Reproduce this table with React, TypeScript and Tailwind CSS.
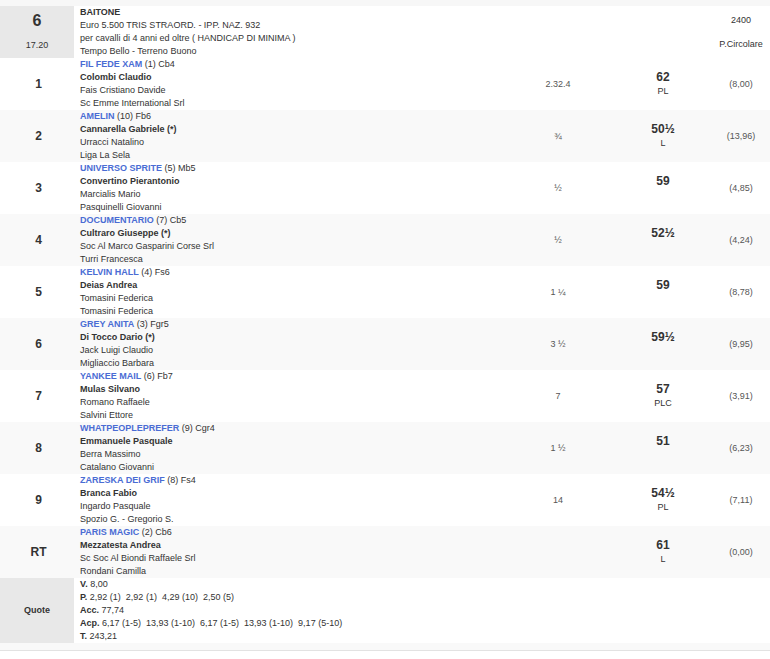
const rows = [
  { n: '1', horse: 'FIL FEDE XAM', info: '(1) Cb4', jockey: 'Colombi Claudio', trainer: 'Fais Cristiano Davide', owner: 'Sc Emme International Srl', time: '2.32.4', weight: '62', tag: 'PL', odds: '(8,00)' },
  { n: '2', horse: 'AMELIN', info: '(10) Fb6', jockey: 'Cannarella Gabriele (*)', trainer: 'Urracci Natalino', owner: 'Liga La Sela', time: '¾', weight: '50½', tag: 'L', odds: '(13,96)' },
  { n: '3', horse: 'UNIVERSO SPRITE', info: '(5) Mb5', jockey: 'Convertino Pierantonio', trainer: 'Marcialis Mario', owner: 'Pasquinelli Giovanni', time: '½', weight: '59', tag: '', odds: '(4,85)' },
  { n: '4', horse: 'DOCUMENTARIO', info: '(7) Cb5', jockey: 'Cultraro Giuseppe (*)', trainer: 'Soc Al Marco Gasparini Corse Srl', owner: 'Turri Francesca', time: '½', weight: '52½', tag: '', odds: '(4,24)' },
  { n: '5', horse: 'KELVIN HALL', info: '(4) Fs6', jockey: 'Deias Andrea', trainer: 'Tomasini Federica', owner: 'Tomasini Federica', time: '1 ¼', weight: '59', tag: '', odds: '(8,78)' },
  { n: '6', horse: 'GREY ANITA', info: '(3) Fgr5', jockey: 'Di Tocco Dario (*)', trainer: 'Jack Luigi Claudio', owner: 'Migliaccio Barbara', time: '3 ½', weight: '59½', tag: '', odds: '(9,95)' },
  { n: '7', horse: 'YANKEE MAIL', info: '(6) Fb7', jockey: 'Mulas Silvano', trainer: 'Romano Raffaele', owner: 'Salvini Ettore', time: '7', weight: '57', tag: 'PLC', odds: '(3,91)' },
  { n: '8', horse: 'WHATPEOPLEPREFER', info: '(9) Cgr4', jockey: 'Emmanuele Pasquale', trainer: 'Berra Massimo', owner: 'Catalano Giovanni', time: '1 ½', weight: '51', tag: '', odds: '(6,23)' },
  { n: '9', horse: 'ZARESKA DEI GRIF', info: '(8) Fs4', jockey: 'Branca Fabio', trainer: 'Ingardo Pasquale', owner: 'Spozio G. - Gregorio S.', time: '14', weight: '54½', tag: 'PL', odds: '(7,11)' },
  { n: 'RT', horse: 'PARIS MAGIC', info: '(2) Cb6', jockey: 'Mezzatesta Andrea', trainer: 'Sc Soc Al Biondi Raffaele Srl', owner: 'Rondani Camilla', time: '', weight: '61', tag: 'L', odds: '(0,00)' },
]

const grid = 'grid grid-cols-[77px_425px_112px_98px_58px]'

export default function App() {
  return (
    <div className="w-[770px] h-[659px] bg-white text-[#333] font-['Liberation_Sans',Arial,sans-serif] text-[9px] leading-[13px]">
      <div className="h-[6px] bg-[#f7f7f7]" />

      {/* race header */}
      <div className={`${grid} h-[52px]`}>
        <div className="mr-[3px] bg-[#e8e8e8] flex flex-col items-center justify-around py-[2px]">
          <span className="text-[16px] leading-[18px] font-bold">6</span>
          <span className="text-[9px]">17.20</span>
        </div>
        <div className="pl-[3px] col-span-3">
          <div className="font-bold">BAITONE</div>
          <div>Euro 5.500 TRIS STRAORD. - IPP. NAZ. 932</div>
          <div>per cavalli di 4 anni ed oltre ( HANDICAP DI MINIMA )</div>
          <div>Tempo Bello - Terreno Buono</div>
        </div>
        <div className="flex flex-col items-center justify-around py-[2px]">
          <span>2400</span>
          <span>P.Circolare</span>
        </div>
      </div>

      {rows.map((r, i) => (
        <div key={r.n} className={`${grid} h-[52px] ${i % 2 === 1 ? 'bg-[#f9f9f9]' : 'bg-white'}`}>
          <div className="flex items-center justify-center text-[12px] font-bold">{r.n}</div>
          <div className="pl-[3px]">
            <div>
              <span className="font-bold text-[#4a6cd4]">{r.horse}</span> {r.info}
            </div>
            <div className="font-bold">{r.jockey}</div>
            <div>{r.trainer}</div>
            <div>{r.owner}</div>
          </div>
          <div className="flex items-center justify-center text-[#555]">{r.time}</div>
          <div className="flex flex-col items-center justify-center">
            <span className="text-[12px] leading-[15px] font-bold">{r.weight}</span>
            <span className="h-[13px]">{r.tag}</span>
          </div>
          <div className="flex items-center justify-center text-[#555]">{r.odds}</div>
        </div>
      ))}

      {/* quote */}
      <div className={`${grid} h-[65px] bg-white`}>
        <div className="mr-[3px] bg-[#e8e8e8] flex items-center justify-center font-bold">Quote</div>
        <div className="pl-[3px] col-span-4">
          <div><b>V.</b> 8,00</div>
          <div><b>P.</b> 2,92 (1)&nbsp; 2,92 (1)&nbsp; 4,29 (10)&nbsp; 2,50 (5)</div>
          <div><b>Acc.</b> 77,74</div>
          <div><b>Acp.</b> 6,17 (1-5)&nbsp; 13,93 (1-10)&nbsp; 6,17 (1-5)&nbsp; 13,93 (1-10)&nbsp; 9,17 (5-10)</div>
          <div><b>T.</b> 243,21</div>
        </div>
      </div>
      <div className="h-[8px] bg-[#f9f9f9] border-b border-[#e2e2e2]" />
    </div>
  )
}
